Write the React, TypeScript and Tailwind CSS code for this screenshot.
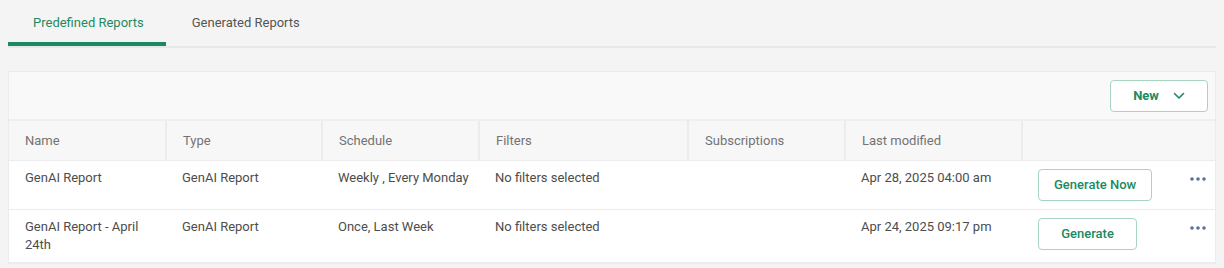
import React from "react";

const cols = [157, 156, 157, 209, 157, 177, 193];
const headers = ["Name", "Type", "Schedule", "Filters", "Subscriptions", "Last modified", ""];

const rows = [
  {
    name: "GenAI Report",
    type: "GenAI Report",
    schedule: "Weekly , Every Monday",
    filters: "No filters selected",
    subs: "",
    modified: "Apr 28, 2025 04:00 am",
    action: "Generate Now",
  },
  {
    name: "GenAI Report - April 24th",
    type: "GenAI Report",
    schedule: "Once, Last Week",
    filters: "No filters selected",
    subs: "",
    modified: "Apr 24, 2025 09:17 pm",
    action: "Generate",
  },
];

function Dots() {
  return (
    <svg width="16" height="4" viewBox="0 0 16 4" className="mt-[8px] shrink-0">
      <circle cx="2" cy="2" r="1.8" fill="#5b6f9c" />
      <circle cx="8" cy="2" r="1.8" fill="#5b6f9c" />
      <circle cx="14" cy="2" r="1.8" fill="#5b6f9c" />
    </svg>
  );
}

export default function App() {
  return (
    <div
      className="w-[1224px] h-[268px] bg-[#f4f4f4] px-2 overflow-hidden"
      style={{ fontFamily: "Roboto, 'Liberation Sans', sans-serif" }}
    >
      <div className="flex h-[48px] border-b-2 border-[#e8e8e8]">
        <div className="h-[46px] pl-[25px] pr-[22px] border-b-[4px] border-[#1b8a62] flex items-center pt-[3px] text-[13px] text-[#1f8a62]">
          Predefined Reports
        </div>
        <div className="h-[46px] px-[26px] flex items-center pb-[1px] text-[13px] text-[#555555]">
          Generated Reports
        </div>
      </div>

      <div className="mt-[23px] border border-[#ececec] bg-white">
        <div className="h-[49px] bg-[#f9f9f9] flex items-start justify-end pt-[8px] pr-[7px] border-b-2 border-[#efefef]">
          <button className="w-[98px] h-[32px] rounded-[4px] border border-[#a7d4bf] bg-white flex items-center justify-center gap-[14px] text-[13px] font-bold text-[#1b8a62]">
            <span>New</span>
            <svg width="12" height="8" viewBox="0 0 12 8" fill="none">
              <path d="M1.5 1.5 L6 6 L10.5 1.5" stroke="#1b8a62" strokeWidth="1.6" strokeLinecap="round" strokeLinejoin="round" />
            </svg>
          </button>
        </div>
        <table className="table-fixed border-collapse w-full">
          <colgroup>
            {cols.map((w, i) => (
              <col key={i} style={{ width: w }} />
            ))}
          </colgroup>
          <thead>
            <tr className="bg-[#f7f7f7]">
              {headers.map((h, i) => (
                <th
                  key={i}
                  className={
                    "h-[39px] pl-4 pr-2 text-left font-normal text-[13px] text-[#737373] border-b border-[#ececec] " +
                    (i < headers.length - 1 ? "border-r-2 border-r-[#ececec]" : "")
                  }
                >
                  {h}
                </th>
              ))}
            </tr>
          </thead>
          <tbody className="text-[13px] text-[#4d4d4d] leading-[18px]">
            {rows.map((r, i) => (
              <tr key={i} className="border-b border-[#ececec]">
                <td className="align-top pl-4 pr-2 py-2">{r.name}</td>
                <td className="align-top pl-4 pr-2 py-2">{r.type}</td>
                <td className="align-top pl-4 pr-1 py-2 whitespace-nowrap">{r.schedule}</td>
                <td className="align-top pl-4 pr-2 py-2">{r.filters}</td>
                <td className="align-top pl-4 pr-2 py-2">{r.subs}</td>
                <td className="align-top pl-4 pr-2 py-2">{r.modified}</td>
                <td className="align-top pl-[16px] pr-[9px] py-2">
                  <div className="flex items-start justify-between">
                    <button className="h-[32px] min-w-[99px] px-[15px] rounded-[4px] border border-[#a7d4bf] bg-white text-[13px] font-medium text-[#1b8a62] leading-none">
                      {r.action}
                    </button>
                    <Dots />
                  </div>
                </td>
              </tr>
            ))}
          </tbody>
        </table>
      </div>
    </div>
  );
}
